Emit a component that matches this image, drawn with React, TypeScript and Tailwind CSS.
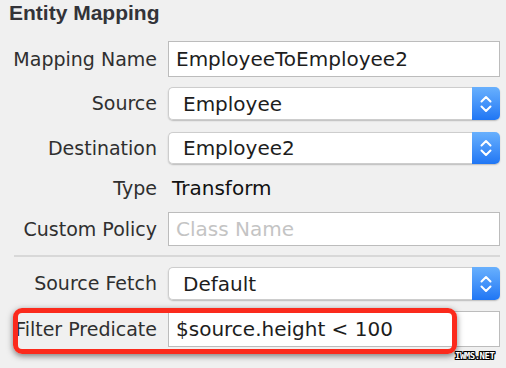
import type { ReactNode } from "react";

const labelFont = "font-['DejaVu_Sans',sans-serif]";

function Row({
  label,
  children,
  className = "",
}: {
  label: string;
  children: ReactNode;
  className?: string;
}) {
  return (
    <div className={`flex items-center ${className}`}>
      <div className="w-[157px] shrink-0 text-right text-[19px] text-[#2f2f2f] whitespace-nowrap">
        {label}
      </div>
      <div className="ml-[11px] h-full w-[332px]">{children}</div>
    </div>
  );
}

function TextField({ value, placeholder }: { value?: string; placeholder?: string }) {
  return (
    <div className="flex h-full items-center border border-[#bcbcbc] bg-white pl-[7px] text-[20px] text-[#1d1d1d] whitespace-nowrap">
      {value ? value : <span className="text-[#c4c4c4]">{placeholder}</span>}
    </div>
  );
}

function Stepper() {
  return (
    <div className="flex h-full w-[28px] shrink-0 items-center justify-center rounded-r-[5px] bg-gradient-to-b from-[#68b0fd] to-[#1f76f4]">
      <svg width="14" height="22" viewBox="0 0 14 22" fill="none">
        <path d="M2.5 8.5 L7 4 L11.5 8.5" stroke="white" strokeWidth="2" strokeLinecap="round" strokeLinejoin="round" />
        <path d="M2.5 13.5 L7 18 L11.5 13.5" stroke="white" strokeWidth="2" strokeLinecap="round" strokeLinejoin="round" />
      </svg>
    </div>
  );
}

function Select({ value }: { value: string }) {
  return (
    <div className="flex h-full rounded-[5px] shadow-[0_1px_1.5px_rgba(0,0,0,0.22)]">
      <div className="flex flex-1 items-center rounded-l-[5px] border border-r-0 border-[#cdcdcd] bg-white pl-[14px] text-[20px] text-[#1d1d1d]">
        {value}
      </div>
      <Stepper />
    </div>
  );
}

export default function App() {
  return (
    <div className={`relative h-[368px] w-[506px] overflow-hidden bg-[#f0f0f0] ${labelFont}`}>
      <h1 className="pl-[9px] pt-[1px] font-['Liberation_Sans',sans-serif] text-[21px] font-bold leading-[24px] text-[#333338]">
        Entity Mapping
      </h1>

      <Row label="Mapping Name" className="mt-[16px] h-[36px]">
        <TextField value="EmployeeToEmployee2" />
      </Row>
      <Row label="Source" className="mt-[10px] h-[33px]">
        <Select value="Employee" />
      </Row>
      <Row label="Destination" className="mt-[12px] h-[32px]">
        <Select value="Employee2" />
      </Row>
      <Row label="Type" className="h-[48px]">
        <div className="flex h-full items-center pl-[4px] text-[20px] text-[#111111]">Transform</div>
      </Row>
      <Row label="Custom Policy" className="h-[34px]">
        <TextField placeholder="Class Name" />
      </Row>

      <div className="ml-[14px] mt-[9px] h-[2px] w-[486px] bg-[#d8d8d8]" />

      <Row label="Source Fetch" className="mt-[10px] h-[33px]">
        <Select value="Default" />
      </Row>

      <div className="relative mt-[11px] h-[36px]">
        <Row label="Filter Predicate" className="h-full">
          <TextField value="$source.height < 100" />
        </Row>
        <div className="absolute left-[13px] top-[-3px] h-[46px] w-[444px] rounded-[9px] border-[5px] border-[#fb2a1c] shadow-[0_2px_6px_rgba(0,0,0,0.5)]" />
      </div>

      <div className="absolute left-[455px] top-[352px] font-['DejaVu_Sans_Mono',monospace] text-[9px] font-bold leading-[9px] tracking-[-0.5px] text-white [text-shadow:1px_0_0_#000,-1px_0_0_#000,0_1px_0_#000,0_-1px_0_#000,1px_1px_0_#000,-1px_-1px_0_#000,1px_-1px_0_#000,-1px_1px_0_#000]">
        IWMS.NET
      </div>
    </div>
  );
}
